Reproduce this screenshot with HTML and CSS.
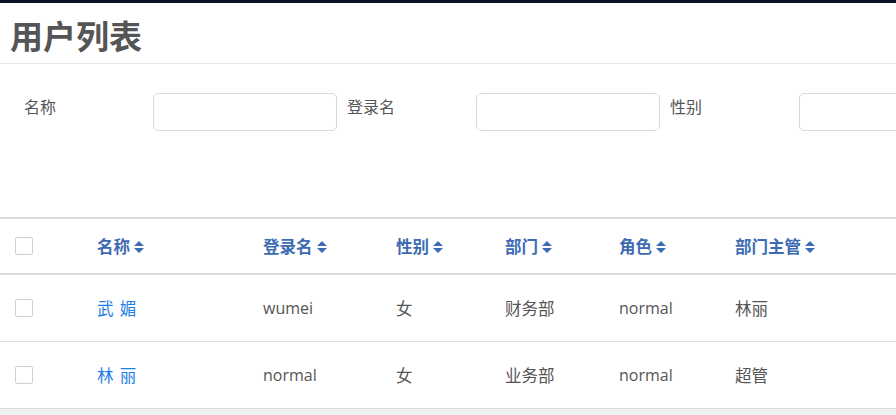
FILE: index.html
```html
<html>
<head>
  <meta http-equiv="Content-Type" content="text/html; charset=utf8">
  <title>用户列表</title>
  <link rel="stylesheet" href="styles.css">
</head>
<body>
  <div class="topbar"></div>
  <div class="page">
    <div class="page_title">用户列表</div>
    <div class="search_form">
      <div class="search_item">
        <label class="search_label">名称</label>
        <input type="text" class="search_input" name="name">
      </div>
      <div class="search_item">
        <label class="search_label">登录名</label>
        <input type="text" class="search_input" name="login">
      </div>
      <div class="search_item">
        <label class="search_label">性别</label>
        <input type="text" class="search_input" name="sex">
      </div>
    </div>
    <table class="user_table">
      <colgroup>
        <col style="width: 97px;">
        <col style="width: 166px;">
        <col style="width: 133px;">
        <col style="width: 109px;">
        <col style="width: 114px;">
        <col style="width: 116px;">
        <col>
      </colgroup>
      <thead>
        <tr>
          <th class="col_check"><input type="checkbox" class="chk"></th>
          <th>名称<svg class="sort_icon" width="10" height="14" viewBox="0 0 10 14"><path d="M0 6 L5 1 L10 6 Z M0 8 L10 8 L5 13 Z"/></svg></th>
          <th>登录名<svg class="sort_icon" width="10" height="14" viewBox="0 0 10 14"><path d="M0 6 L5 1 L10 6 Z M0 8 L10 8 L5 13 Z"/></svg></th>
          <th>性别<svg class="sort_icon" width="10" height="14" viewBox="0 0 10 14"><path d="M0 6 L5 1 L10 6 Z M0 8 L10 8 L5 13 Z"/></svg></th>
          <th>部门<svg class="sort_icon" width="10" height="14" viewBox="0 0 10 14"><path d="M0 6 L5 1 L10 6 Z M0 8 L10 8 L5 13 Z"/></svg></th>
          <th>角色<svg class="sort_icon" width="10" height="14" viewBox="0 0 10 14"><path d="M0 6 L5 1 L10 6 Z M0 8 L10 8 L5 13 Z"/></svg></th>
          <th>部门主管<svg class="sort_icon" width="10" height="14" viewBox="0 0 10 14"><path d="M0 6 L5 1 L10 6 Z M0 8 L10 8 L5 13 Z"/></svg></th>
        </tr>
      </thead>
      <tbody>
        <tr>
          <td class="col_check"><input type="checkbox" class="chk"></td>
          <td><a class="user_link" href="#">武 媚</a></td>
          <td>wumei</td>
          <td class="cjk">女</td>
          <td class="cjk">财务部</td>
          <td>normal</td>
          <td class="cjk">林丽</td>
        </tr>
        <tr>
          <td class="col_check"><input type="checkbox" class="chk"></td>
          <td><a class="user_link" href="#">林 丽</a></td>
          <td>normal</td>
          <td class="cjk">女</td>
          <td class="cjk">业务部</td>
          <td>normal</td>
          <td class="cjk">超管</td>
        </tr>
      </tbody>
    </table>
  </div>
</body>
</html>
```

FILE: styles.css
```css
html {
  overflow: hidden;
}
body {
  margin: 0;
  background-color: #f0f1f5;
  font-family: "Open Sans", "Noto Sans CJK SC", sans-serif;
  font-size: 16px;
  color: #555555;
}
.topbar {
  height: 3px;
  background-color: #0b1527;
}
.page {
  background-color: #ffffff;
  width: 1000px;
}
.page_title {
  height: 61px;
  box-sizing: border-box;
  padding: 4px 0 0 10px;
  display: flex;
  align-items: center;
  font-family: "Noto Sans CJK SC", sans-serif;
  font-size: 33px;
  font-weight: bold;
  color: #555555;
  border-bottom: 1px solid #e5e5e5;
}
.search_form {
  display: flex;
  height: 153px;
  box-sizing: border-box;
  padding: 29px 0 0 24px;
}
.search_item {
  display: flex;
  margin-right: 10px;
}
.search_label {
  width: 129px;
  padding-top: 2px;
  line-height: 22px;
  font-family: "Noto Sans CJK SC", sans-serif;
  color: #555555;
}
.search_input {
  width: 184px;
  height: 38px;
  box-sizing: border-box;
  border: 1px solid #d9d9d9;
  border-radius: 5px;
  outline: none;
  font-size: 16px;
}
.user_table {
  width: 896px;
  table-layout: fixed;
  border-collapse: collapse;
  border-top: 2px solid #dddddd;
}
.user_table th {
  height: 56px;
  padding: 0;
  text-align: left;
  font-family: "Noto Sans CJK SC", sans-serif;
  font-size: 16.5px;
  font-weight: bold;
  color: #3d6bb3;
  border-bottom: 2px solid #dddddd;
  white-space: nowrap;
}
.user_table td {
  height: 67px;
  padding: 0;
  border-bottom: 1px solid #dddddd;
  white-space: nowrap;
}
.user_table td.cjk {
  font-size: 16.5px;
}
.col_check {
  padding-left: 15px !important;
}
.chk {
  -webkit-appearance: none;
  appearance: none;
  width: 18px;
  height: 18px;
  margin: 0;
  display: block;
  border: 1px solid #d0d0d0;
  border-radius: 2px;
  background-color: #ffffff;
}
.sort_icon {
  fill: #3d6bb3;
  margin-left: 4px;
  vertical-align: -1px;
}
.user_link {
  color: #1f7fe6;
  font-size: 16.5px;
  letter-spacing: 1px;
  text-decoration: none;
}
```
